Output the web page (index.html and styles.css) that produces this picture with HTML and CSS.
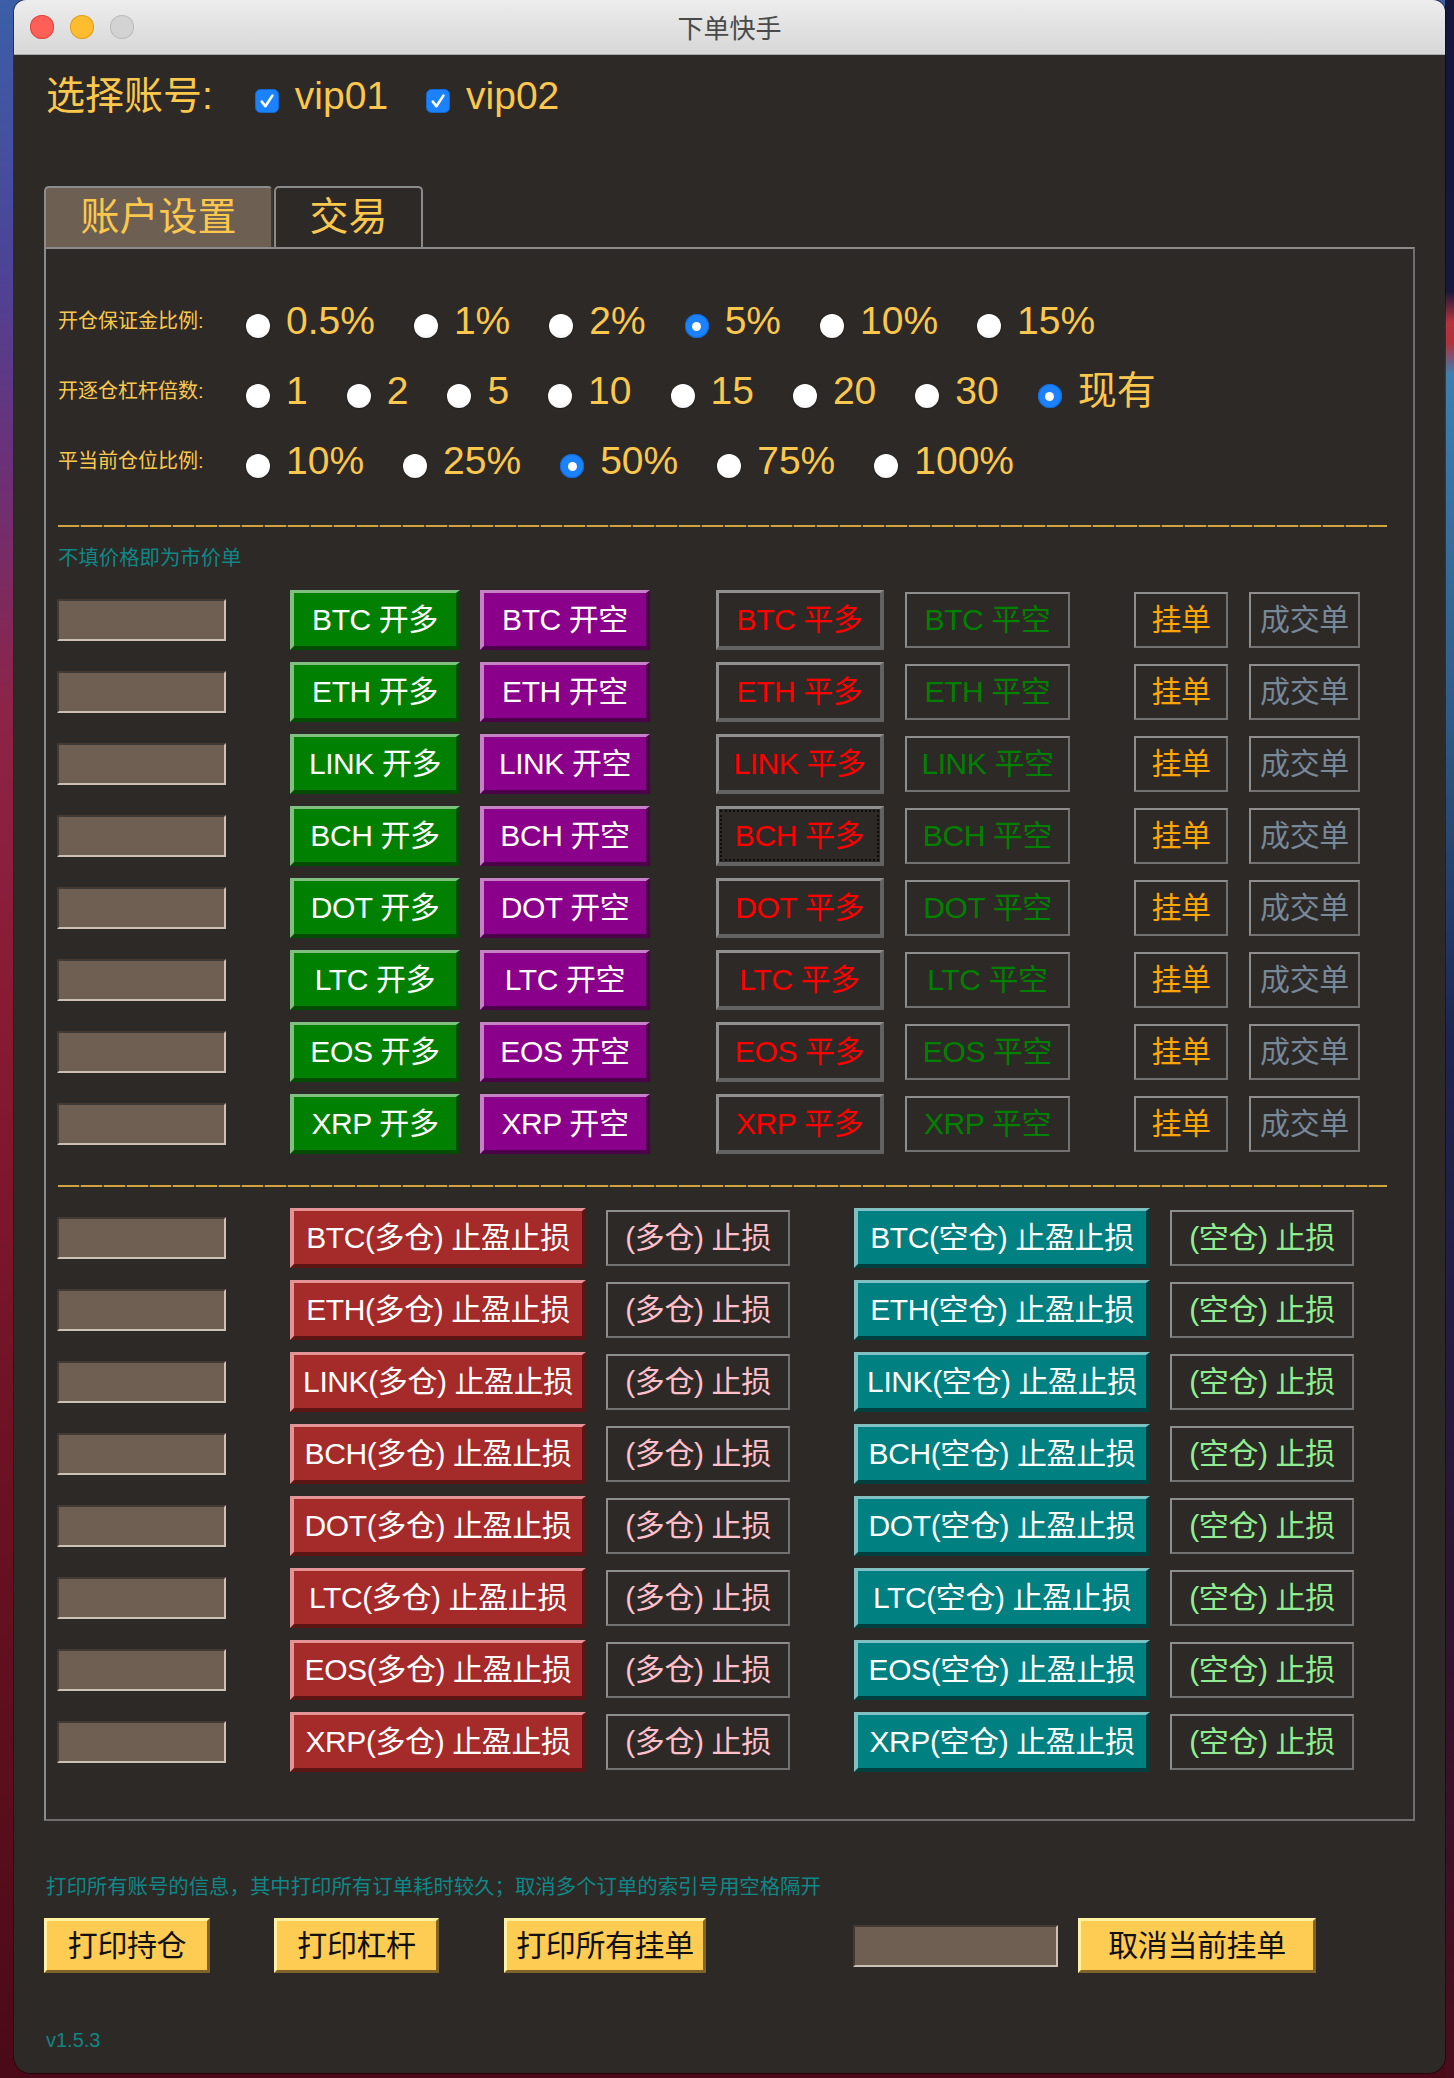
FILE: index.html
```html
<!DOCTYPE html>
<html lang="zh">
<head>
<meta charset="utf-8">
<title>下单快手</title>
<link rel="stylesheet" href="styles.css">
</head>
<body>
<div class="window">
  <div class="titlebar">
    <div class="lights">
      <span class="light red"></span><span class="light yellow"></span><span class="light gray"></span>
    </div>
    <div class="title">下单快手</div>
    <div></div>
  </div>
  <div class="content">
    <div class="accounts">
      <span class="acc-label">选择账号:</span>
      <span class="check first"><svg class="cbox" width="24" height="24" viewBox="0 0 24 24"><rect x="0.5" y="0.5" width="23" height="23" rx="5" fill="#1b82fb" stroke="#1169d6"/><path d="M6.8 12.6 L10.4 17.2 L17.4 6.6" fill="none" stroke="#fff" stroke-width="2.6" stroke-linecap="round" stroke-linejoin="round"/></svg><span>vip01</span></span>
      <span class="check second"><svg class="cbox" width="24" height="24" viewBox="0 0 24 24"><rect x="0.5" y="0.5" width="23" height="23" rx="5" fill="#1b82fb" stroke="#1169d6"/><path d="M6.8 12.6 L10.4 17.2 L17.4 6.6" fill="none" stroke="#fff" stroke-width="2.6" stroke-linecap="round" stroke-linejoin="round"/></svg><span>vip02</span></span>
    </div>

    <div class="tabs">
      <div class="tab tab-active">账户设置</div>
      <div class="tab tab-trade">交易</div>
    </div>

    <div class="pane">
      <div class="setting-row">
        <span class="set-label">开仓保证金比例:</span>
        <div class="radios">
          <span class="ritem"><span class="radio"></span><span class="rtext">0.5%</span></span>
          <span class="ritem"><span class="radio"></span><span class="rtext">1%</span></span>
          <span class="ritem"><span class="radio"></span><span class="rtext">2%</span></span>
          <span class="ritem"><span class="radio on"></span><span class="rtext">5%</span></span>
          <span class="ritem"><span class="radio"></span><span class="rtext">10%</span></span>
          <span class="ritem"><span class="radio"></span><span class="rtext">15%</span></span>
        </div>
      </div>
      <div class="setting-row">
        <span class="set-label">开逐仓杠杆倍数:</span>
        <div class="radios">
          <span class="ritem"><span class="radio"></span><span class="rtext">1</span></span>
          <span class="ritem"><span class="radio"></span><span class="rtext">2</span></span>
          <span class="ritem"><span class="radio"></span><span class="rtext">5</span></span>
          <span class="ritem"><span class="radio"></span><span class="rtext">10</span></span>
          <span class="ritem"><span class="radio"></span><span class="rtext">15</span></span>
          <span class="ritem"><span class="radio"></span><span class="rtext">20</span></span>
          <span class="ritem"><span class="radio"></span><span class="rtext">30</span></span>
          <span class="ritem"><span class="radio on"></span><span class="rtext">现有</span></span>
        </div>
      </div>
      <div class="setting-row">
        <span class="set-label">平当前仓位比例:</span>
        <div class="radios">
          <span class="ritem"><span class="radio"></span><span class="rtext">10%</span></span>
          <span class="ritem"><span class="radio"></span><span class="rtext">25%</span></span>
          <span class="ritem"><span class="radio on"></span><span class="rtext">50%</span></span>
          <span class="ritem"><span class="radio"></span><span class="rtext">75%</span></span>
          <span class="ritem"><span class="radio"></span><span class="rtext">100%</span></span>
        </div>
      </div>

      <div class="dash-line"></div>
      <div class="hint">不填价格即为市价单</div>

      <div class="trade-rows">
        <div class="trade-row"><div class="entry"></div><div class="btn b-long">BTC 开多</div><div class="btn b-short">BTC 开空</div><div class="btn b-cl">BTC 平多</div><div class="btn b-cs">BTC 平空</div><div class="btn b-order">挂单</div><div class="btn b-deal">成交单</div></div>
        <div class="trade-row"><div class="entry"></div><div class="btn b-long">ETH 开多</div><div class="btn b-short">ETH 开空</div><div class="btn b-cl">ETH 平多</div><div class="btn b-cs">ETH 平空</div><div class="btn b-order">挂单</div><div class="btn b-deal">成交单</div></div>
        <div class="trade-row"><div class="entry"></div><div class="btn b-long">LINK 开多</div><div class="btn b-short">LINK 开空</div><div class="btn b-cl">LINK 平多</div><div class="btn b-cs">LINK 平空</div><div class="btn b-order">挂单</div><div class="btn b-deal">成交单</div></div>
        <div class="trade-row"><div class="entry"></div><div class="btn b-long">BCH 开多</div><div class="btn b-short">BCH 开空</div><div class="btn b-cl focused">BCH 平多</div><div class="btn b-cs">BCH 平空</div><div class="btn b-order">挂单</div><div class="btn b-deal">成交单</div></div>
        <div class="trade-row"><div class="entry"></div><div class="btn b-long">DOT 开多</div><div class="btn b-short">DOT 开空</div><div class="btn b-cl">DOT 平多</div><div class="btn b-cs">DOT 平空</div><div class="btn b-order">挂单</div><div class="btn b-deal">成交单</div></div>
        <div class="trade-row"><div class="entry"></div><div class="btn b-long">LTC 开多</div><div class="btn b-short">LTC 开空</div><div class="btn b-cl">LTC 平多</div><div class="btn b-cs">LTC 平空</div><div class="btn b-order">挂单</div><div class="btn b-deal">成交单</div></div>
        <div class="trade-row"><div class="entry"></div><div class="btn b-long">EOS 开多</div><div class="btn b-short">EOS 开空</div><div class="btn b-cl">EOS 平多</div><div class="btn b-cs">EOS 平空</div><div class="btn b-order">挂单</div><div class="btn b-deal">成交单</div></div>
        <div class="trade-row"><div class="entry"></div><div class="btn b-long">XRP 开多</div><div class="btn b-short">XRP 开空</div><div class="btn b-cl">XRP 平多</div><div class="btn b-cs">XRP 平空</div><div class="btn b-order">挂单</div><div class="btn b-deal">成交单</div></div>
      </div>

      <div class="dash-line second"></div>

      <div class="stop-rows">
        <div class="trade-row"><div class="entry"></div><div class="btn s-long">BTC(多仓) 止盈止损</div><div class="btn s-lstop">(多仓) 止损</div><div class="btn s-short">BTC(空仓) 止盈止损</div><div class="btn s-sstop">(空仓) 止损</div></div>
        <div class="trade-row"><div class="entry"></div><div class="btn s-long">ETH(多仓) 止盈止损</div><div class="btn s-lstop">(多仓) 止损</div><div class="btn s-short">ETH(空仓) 止盈止损</div><div class="btn s-sstop">(空仓) 止损</div></div>
        <div class="trade-row"><div class="entry"></div><div class="btn s-long">LINK(多仓) 止盈止损</div><div class="btn s-lstop">(多仓) 止损</div><div class="btn s-short">LINK(空仓) 止盈止损</div><div class="btn s-sstop">(空仓) 止损</div></div>
        <div class="trade-row"><div class="entry"></div><div class="btn s-long">BCH(多仓) 止盈止损</div><div class="btn s-lstop">(多仓) 止损</div><div class="btn s-short">BCH(空仓) 止盈止损</div><div class="btn s-sstop">(空仓) 止损</div></div>
        <div class="trade-row"><div class="entry"></div><div class="btn s-long">DOT(多仓) 止盈止损</div><div class="btn s-lstop">(多仓) 止损</div><div class="btn s-short">DOT(空仓) 止盈止损</div><div class="btn s-sstop">(空仓) 止损</div></div>
        <div class="trade-row"><div class="entry"></div><div class="btn s-long">LTC(多仓) 止盈止损</div><div class="btn s-lstop">(多仓) 止损</div><div class="btn s-short">LTC(空仓) 止盈止损</div><div class="btn s-sstop">(空仓) 止损</div></div>
        <div class="trade-row"><div class="entry"></div><div class="btn s-long">EOS(多仓) 止盈止损</div><div class="btn s-lstop">(多仓) 止损</div><div class="btn s-short">EOS(空仓) 止盈止损</div><div class="btn s-sstop">(空仓) 止损</div></div>
        <div class="trade-row"><div class="entry"></div><div class="btn s-long">XRP(多仓) 止盈止损</div><div class="btn s-lstop">(多仓) 止损</div><div class="btn s-short">XRP(空仓) 止盈止损</div><div class="btn s-sstop">(空仓) 止损</div></div>
      </div>
    </div>

    <div class="foot-note">打印所有账号的信息，其中打印所有订单耗时较久；取消多个订单的索引号用空格隔开</div>
    <div class="foot-row">
      <div class="btn ybtn y1">打印持仓</div>
      <div class="btn ybtn y2">打印杠杆</div>
      <div class="btn ybtn y3">打印所有挂单</div>
      <div class="entry foot-entry"></div>
      <div class="btn ybtn y4">取消当前挂单</div>
    </div>
    <div class="version">v1.5.3</div>
  </div>
</div>
</body>
</html>
```

FILE: styles.css
```css
* { box-sizing: border-box; margin: 0; padding: 0; }

html, body { width: 1454px; height: 2078px; overflow: hidden; }

body {
  font-family: "Liberation Sans", "Noto Sans CJK SC", sans-serif;
  background:
    linear-gradient(180deg, #15173a 0%, #17183a 14%, #b3343f 15.5%, #b0303d 16.5%, #3d7fae 18%, #2d5a88 35%, #1d2450 50%, #2a1630 75%, #4a0d1c 100%) right top / 9px 100% no-repeat,
    linear-gradient(180deg, #3c5fa8 0%, #4b4598 12%, #6a3178 22%, #8c2448 34%, #8a1a34 48%, #6c1224 70%, #4a0a18 100%);
}

.window {
  margin-left: 14px;
  width: 1431px;
  height: 2073px;
  background: #2d2926;
  border-radius: 12px 12px 16px 16px;
  overflow: hidden;
  box-shadow: 0 0 0 1px rgba(0, 0, 0, 0.45);
}

/* title bar */
.titlebar {
  height: 55px;
  background: linear-gradient(180deg, #ededed 0%, #d7d7d7 100%);
  border-bottom: 1px solid #acacac;
  display: grid;
  grid-template-columns: 1fr auto 1fr;
  align-items: center;
}
.lights { display: flex; gap: 16px; padding-left: 16px; }
.light { width: 24px; height: 24px; border-radius: 50%; display: block; }
.light.red { background: #fe5f57; box-shadow: inset 0 0 0 1px #e1453f; }
.light.yellow { background: #febc2e; box-shadow: inset 0 0 0 1px #dea024; }
.light.gray { background: #d3d3d3; box-shadow: inset 0 0 0 1px #bcbcbc; }
.title {
  font-family: "Noto Sans CJK SC", sans-serif;
  font-size: 26px;
  line-height: 30px;
  color: #4a4a4a;
}

.content { padding: 19px 30px 0 30px; }

/* accounts */
.accounts {
  display: flex;
  align-items: center;
  height: 44px;
  padding-left: 2px;
  color: #fbc84d;
  font-size: 39px;
  line-height: 44px;
}
.check { display: flex; align-items: center; gap: 16px; }
.check.first { margin-left: 42px; }
.check.second { margin-left: 38px; gap: 16px; }
.cbox { display: block; margin-top: 10px; }

/* tabs */
.tabs { display: flex; gap: 1px; margin-top: 68px; height: 61px; }
.tab {
  height: 61px;
  font-size: 39px;
  line-height: 57px;
  text-align: center;
  color: #fbc84d;
  border: 2px solid #8a8a8a;
  border-bottom: none;
  border-radius: 5px 5px 0 0;
  background: #2d2926;
}
.tab-active { width: 229px; background: #6e5f53; border-color: #8c8c8c #3e3631 #3e3631 #8c8c8c; }
.tab-trade { width: 149px; }

/* pane */
.pane {
  border: 2px solid;
  border-color: #8a8a8a #6e6e6e #6e6e6e #8a8a8a;
  padding: 37px 0 47px 0;
}

.setting-row {
  display: flex;
  align-items: center;
  height: 70px;
  padding-left: 12px;
}
.set-label {
  width: 188px;
  font-size: 20px;
  line-height: 24px;
  color: #fbc84d;
}
.radios { display: flex; align-items: center; gap: 39px; }
.ritem { display: flex; align-items: center; gap: 16px; }
.rtext { font-size: 39px; line-height: 46px; color: #fbc84d; }
.radio {
  width: 24px;
  height: 24px;
  margin-top: 10px;
  border-radius: 50%;
  background: radial-gradient(circle at 50% 35%, #ffffff 55%, #e9e9e9 100%);
  box-shadow: 0 0.5px 1.5px rgba(0, 0, 0, 0.55);
  display: flex;
  align-items: center;
  justify-content: center;
}
.radio.on { background: #1b82fb; box-shadow: inset 0 0 0 1px #1169d6; }
.radio.on::after {
  content: "";
  width: 9px;
  height: 9px;
  border-radius: 50%;
  background: #fff;
}

.dash-line {
  margin: 29px 0 0 12px;
  width: 1329px;
  height: 2px;
  background: repeating-linear-gradient(90deg, #cfa43f 0 21px, rgba(207, 164, 63, 0.25) 21px 23px);
}
.dash-line.second { margin-top: 31px; }

.hint {
  margin: 19px 0 0 12px;
  font-size: 20.4px;
  line-height: 24px;
  color: #0f8787;
}

.trade-rows { margin-top: 20px; display: flex; flex-direction: column; gap: 12px; }
.stop-rows { margin-top: 21px; display: flex; flex-direction: column; gap: 12px; }

.trade-row { display: flex; align-items: center; height: 60px; }

.entry {
  width: 169px;
  height: 42px;
  margin-left: 11px;
  background: #6f5f53;
  border: 2px solid;
  border-color: #433a33 #cbc0b4 #cbc0b4 #433a33;
}

.btn {
  display: flex;
  align-items: center;
  justify-content: center;
  white-space: nowrap;
  font-size: 30px;
  line-height: 36px;
  letter-spacing: -0.4px;
  color: #fff;
}

/* raised colour buttons */
.b-long, .b-short, .s-long, .s-short {
  height: 60px;
  border-style: solid;
  border-width: 3px 4px 4px 4px;
}
.b-long {
  width: 170px; margin-left: 64px;
  background: #008000;
  border-color: #80c080 #004c00 #004c00 #80c080;
}
.b-short {
  width: 170px; margin-left: 20px;
  background: #8b008b;
  border-color: #c680c6 #4c004c #4c004c #c680c6;
}
.b-cl {
  position: relative;
  width: 168px; height: 60px; margin-left: 66px;
  color: #ff0000;
  border-style: solid;
  border-width: 3px 4px 4px 3px;
  border-color: #8f8f8f #626262 #626262 #8f8f8f;
}
.b-cl.focused::after {
  content: "";
  position: absolute;
  inset: 1px;
  border: 2px dotted #0c0c0c;
}
.b-cs, .b-order, .b-deal, .s-lstop, .s-sstop {
  height: 56px;
  border: 2px solid;
  border-color: #8e8e8e #717171 #717171 #8e8e8e;
}
.b-cs { width: 165px; margin-left: 21px; color: #008000; }
.b-order { width: 94px; margin-left: 64px; color: #ffa500; }
.b-deal { width: 111px; margin-left: 21px; color: #778899; }

.s-long {
  width: 296px; margin-left: 64px;
  background: #a52a2a;
  border-color: #e49494 #5c1515 #5c1515 #e49494;
}
.s-lstop { width: 184px; margin-left: 20px; color: #ffc0cb; }
.s-short {
  width: 296px; margin-left: 64px;
  background: #008080;
  border-color: #80c0c0 #003f3f #003f3f #80c0c0;
}
.s-sstop { width: 184px; margin-left: 20px; color: #90ee90; }

/* footer */
.foot-note {
  margin: 54px 0 0 2px;
  font-size: 20.4px;
  line-height: 24px;
  color: #0f8787;
}
.foot-row { display: flex; align-items: center; height: 55px; margin-top: 19px; }
.ybtn {
  height: 55px;
  color: #111;
  background: #fecb53;
  border-style: solid;
  border-width: 3px 3px 3px 3px;
  border-color: #fff1a2 #7f6328 #7f6328 #fff1a2;
}
.y1 { width: 166px; }
.y2 { width: 165px; margin-left: 64px; }
.y3 { width: 202px; margin-left: 65px; }
.foot-entry { width: 205px; margin-left: 147px; }
.y4 { width: 238px; margin-left: 20px; }

.version {
  margin: 56px 0 0 2px;
  font-size: 20px;
  line-height: 22px;
  color: #108585;
}
```
